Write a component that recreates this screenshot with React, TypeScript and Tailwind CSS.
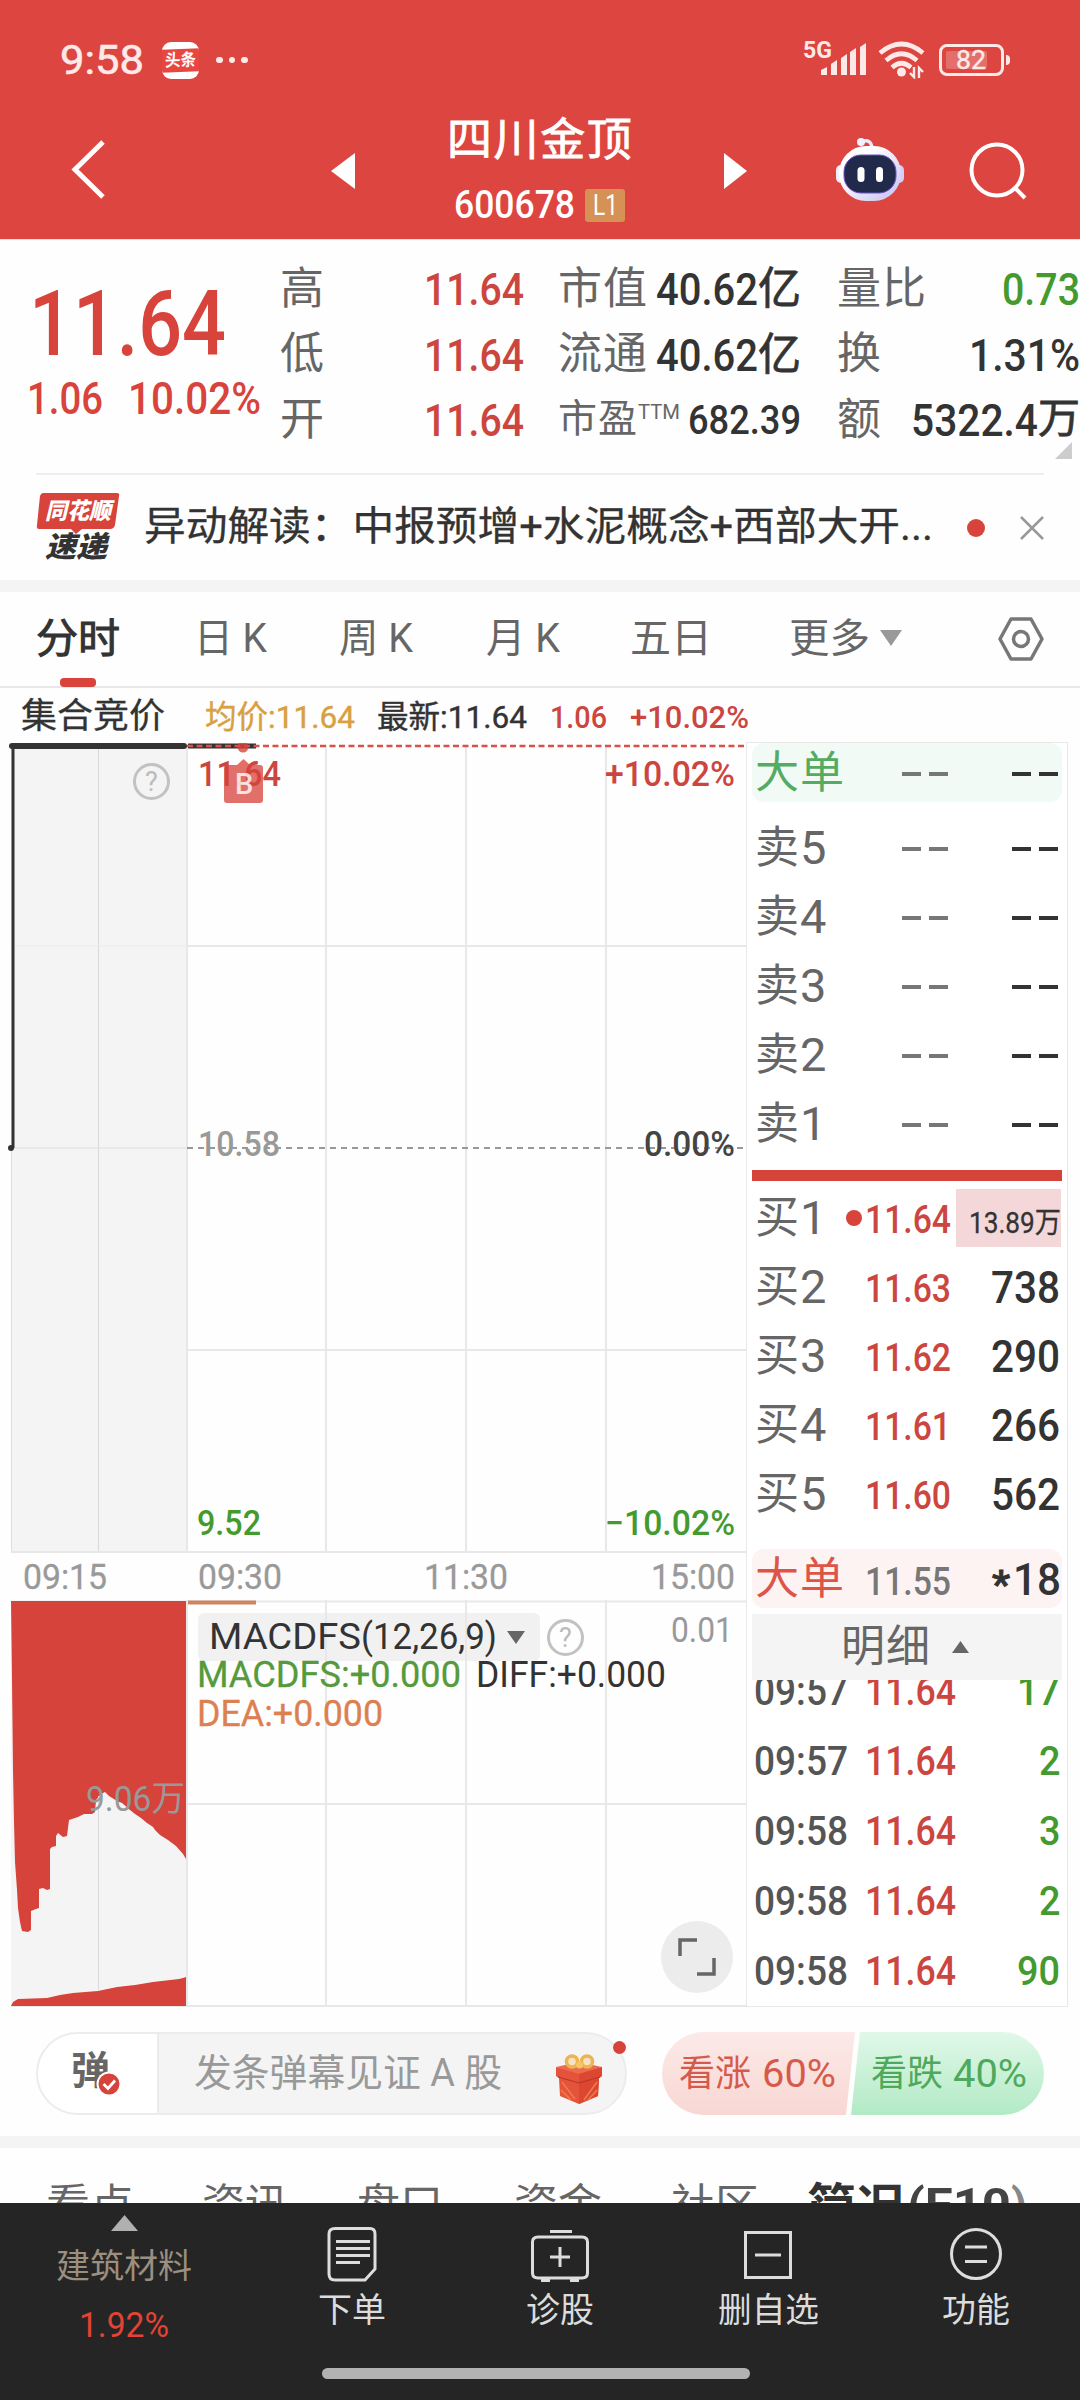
import React, { useLayoutEffect, useRef, useState } from 'react';
import clsx from 'clsx';

type FitProps = {
	w: number;
	className?: string;
	children: React.ReactNode;
};

// Text squeezed horizontally to a given width, gives the digits their narrow look
const Fit: React.FC<FitProps> = ({ w, className, children }) => {
	const ref = useRef<HTMLSpanElement>(null);
	const [scale, setScale] = useState(1);

	useLayoutEffect(() => {
		if (ref.current) setScale(w / ref.current.getBoundingClientRect().width * scale);
	}, [w]);

	return (
		<span className={clsx('block shrink-0 whitespace-nowrap leading-none', className)} style={{ width: w }}>
			<span ref={ref} className="inline-block origin-left align-top" style={{ transform: `scaleX(${scale})` }}>
				{children}
			</span>
		</span>
	);
};

const StatusBar = () => (
	<div className="h-[120px] flex items-center pl-[60px] pr-[70px] text-[#fdeae8]">
		<Fit w={84} className="text-[41px] [-webkit-text-stroke:0.6px]">9:58</Fit>
		<div className="ml-[18px] w-[37px] h-[37px] rounded-[9px] bg-white overflow-hidden flex items-center">
			<div className="w-full h-[23px] bg-[#e8473f] -skew-y-2 flex items-center justify-center">
				<Fit w={31} className="text-[17px] font-bold text-white">头条</Fit>
			</div>
		</div>
		<div className="ml-[17px] flex gap-[6px]">
			<i className="size-[6.5px] rounded-full bg-[#fdeae8]" />
			<i className="size-[6.5px] rounded-full bg-[#fdeae8]" />
			<i className="size-[6.5px] rounded-full bg-[#fdeae8]" />
		</div>
		<div className="ml-auto flex items-center">
			<div className="relative w-[64px] h-[36px]">
				<Fit w={29} className="absolute left-0 top-[-3px] text-[23px] font-bold">5G</Fit>
				<svg className="absolute right-0 top-0" width="64" height="36" viewBox="0 0 64 36" fill="currentColor">
					<path d="M18 28l6-3v8h-6zM28 22l6-4v15h-6zM38 16l6-4v21h-6zM47 10l6-4v27h-6zM57 5l6-4v32h-6z" />
				</svg>
			</div>
			<svg className="ml-[11px]" width="48" height="38" viewBox="0 0 48 38" fill="none" stroke="currentColor" strokeWidth="4.6">
				<path d="M2 12Q23.500-6 45 12" />
				<path d="M8 19.500Q23.500 6 39 19.500" />
				<path d="M14 26.500Q23.500 18 33 26.500" />
				<circle cx="23.500" cy="31" r="4.500" fill="currentColor" stroke="none" />
				<path d="M36 26v10l-4-4M41 37V27l4 4" strokeWidth="2.400" />
			</svg>
			<div className="ml-[13px] w-[65px] h-[32px] rounded-[8px] border-[3px] border-[#fdeae8] p-[4px] flex relative">
				<div className="w-[41px] h-full bg-[#fdeae8]/25 rounded-[2px]" />
				<Fit w={30} className="absolute left-[14px] top-[0px] text-[26px] [-webkit-text-stroke:0.4px]">82</Fit>
			</div>
			<div className="ml-[2px] w-[4px] h-[10px] rounded-r bg-[#fdeae8]" />
		</div>
	</div>
);

const Robot = () => (
	<svg width="70" height="66" viewBox="0 0 70 66" fill="none">
		<defs>
			<linearGradient id="shell" x1="0" y1="0" x2="1" y2="1">
				<stop offset="0.3" stopColor="#ffffff" />
				<stop offset="1" stopColor="#c3bdf0" />
			</linearGradient>
		</defs>
		<path d="M26 7Q36 3 37 13" stroke="#eeeafc" strokeWidth="3.500" />
		<circle cx="26" cy="7" r="4" fill="#f3f0ff" />
		<rect x="1" y="30" width="12" height="18" rx="5" fill="#f1effd" />
		<rect x="57" y="30" width="12" height="18" rx="5" fill="#d5cff5" />
		<rect x="4" y="11" width="62" height="55" rx="27" fill="url(#shell)" />
		<rect x="9" y="20" width="52" height="38" rx="17" fill="#222a4c" stroke="#6d52c8" strokeWidth="1" />
		<rect x="22.500" y="32" width="7" height="15" rx="3.500" fill="#fff" />
		<rect x="41" y="32" width="7" height="15" rx="3.500" fill="#fff" />
	</svg>
);

const Header = () => (
	<div className="bg-[#dd4540] h-[239px]">
		<StatusBar />
		<div className="h-[119px] flex items-center text-white">
			<svg className="ml-[69px] mt-[-21px]" width="38" height="62" viewBox="0 0 38 62" fill="none" stroke="currentColor" strokeWidth="5">
				<path d="M34 4L6 31.500L34 59" />
			</svg>
			<svg className="ml-[224px] mt-[-18px]" width="24" height="36" fill="currentColor"><path d="M0 18L24 0V36Z" /></svg>
			<div className="ml-[92px] w-[184px] h-full flex flex-col">
				<div className="mt-[-4px] text-[45px] leading-[50px] tracking-[1.6px] whitespace-nowrap [-webkit-text-stroke:0.8px]">四川金顶</div>
				<div className="mt-[20px] ml-[7px] flex items-center">
					<Fit w={121} className="text-[39px] font-medium">600678</Fit>
					<div className="ml-[10px] w-[40px] h-[33px] rounded-[3px] bg-[#d69254] flex items-center justify-center">
						<Fit w={25} className="text-[29px]">L1</Fit>
					</div>
				</div>
			</div>
			<svg className="ml-[93px] mt-[-18px]" width="23" height="36" fill="currentColor"><path d="M23 18L0 0V36Z" /></svg>
			<div className="ml-[88px] mt-[-24px]"><Robot /></div>
			<svg className="ml-[62px] mt-[-16px]" width="60" height="60" viewBox="0 0 60 60" fill="none" stroke="currentColor" strokeWidth="4">
				<circle cx="30" cy="28" r="25.500" />
				<path d="M48 46L58 56" />
			</svg>
		</div>
	</div>
);

const LABEL = 'text-[44px] leading-none tracking-[1px] text-[#666] whitespace-nowrap';
const ROW = 'h-[65.5px] flex items-center justify-between';

const Quote = () => (
	<div className="relative h-[233px] pt-[16px] flex">
		<div className="w-[280px] shrink-0 text-[#d8433b]">
			<Fit w={197} className="ml-[29px] mt-[24px] text-[90px] font-medium">11.64</Fit>
			<div className="flex mt-[7px]">
				<Fit w={76} className="ml-[27px] text-[44px] font-medium">1.06</Fit>
				<Fit w={133} className="ml-[25px] text-[44px] font-medium">10.02%</Fit>
			</div>
		</div>
		<div className="w-[244px]">
			{['高', '低', '开'].map((label) => (
				<div key={label} className={ROW}>
					<span className={LABEL}>{label}</span>
					<Fit w={100} className="mt-[2px] text-[45px] font-medium text-[#cc463f]">11.64</Fit>
				</div>
			))}
		</div>
		<div className="ml-[34px] w-[243px]">
			{['市值', '流通'].map((label) => (
				<div key={label} className={ROW}>
					<span className={LABEL}>{label}</span>
					<div className="flex mt-[2px] text-[#333]">
						<Fit w={102} className="text-[45px] font-medium">40.62</Fit>
						<Fit w={43} className="text-[44px] [-webkit-text-stroke:0.8px]">亿</Fit>
					</div>
				</div>
			))}
			<div className={ROW}>
				<div className="flex text-[#666]">
					<span className="text-[39px] leading-none tracking-[1px]">市盈</span>
					<Fit w={42} className="mt-[2px] text-[21px]">TTM</Fit>
				</div>
				<Fit w={113} className="mt-[2px] text-[41px] font-medium text-[#333]">682.39</Fit>
			</div>
		</div>
		<div className="ml-[36px] w-[243px]">
			<div className={ROW}>
				<span className={LABEL}>量比</span>
				<Fit w={78} className="mt-[2px] text-[45px] font-medium text-[#449a2e]">0.73</Fit>
			</div>
			<div className={ROW}>
				<span className={LABEL}>换</span>
				<Fit w={111} className="mt-[2px] text-[45px] font-medium text-[#333]">1.31%</Fit>
			</div>
			<div className={ROW}>
				<span className={LABEL}>额</span>
				<div className="flex mt-[1px] text-[#333]">
					<Fit w={127} className="text-[45px] font-medium">5322.4</Fit>
					<Fit w={42} className="text-[42px] [-webkit-text-stroke:0.8px]">万</Fit>
				</div>
			</div>
		</div>
		<svg className="absolute right-[8px] top-[202px]" width="17" height="17" fill="#ccc"><path d="M17 0V17H0Z" /></svg>
	</div>
);

const News = () => (
	<div className="h-[107px] mx-[36px] border-t-2 border-[#eee] flex items-center">
		<div className="relative w-[84px] h-[70px] mt-[-3px]">
			<svg className="absolute left-0 top-0" width="84" height="44" viewBox="0 0 84 44" fill="#d8433b">
				<path d="M7 2H81Q84 2 83 5L79 34Q78 38 74 38H46L40 43L35 38H4Q0 38 1 34L4 5Q5 2 7 2Z" />
			</svg>
			<Fit w={66} className="absolute left-[9px] top-[9px] text-[23px] font-black italic text-white">同花顺</Fit>
			<Fit w={62} className="absolute left-[9px] top-[42px] text-[29px] font-black italic text-[#333]">速递</Fit>
		</div>
		<Fit w={789} className="ml-[24px] mt-[-2px] text-[40px] text-[#333] [-webkit-text-stroke:0.3px]">异动解读：中报预增+水泥概念+西部大开...</Fit>
		<div className="ml-[34px] size-[18px] rounded-full bg-[#d8433b]" />
		<svg className="ml-[35px]" width="24" height="24" viewBox="0 0 24 24" stroke="#999" strokeWidth="2.500">
			<path d="M1 1L23 23M23 1L1 23" />
		</svg>
	</div>
);

const TAB = 'text-[40px] text-[#666]';

const ChartTabs = () => (
	<div className="relative h-[96px] border-b-2 border-[#e8e8e8] flex items-center pl-[36px]">
		<Fit w={84} className="text-[41px] text-[#333] [-webkit-text-stroke:1px]">分时</Fit>
		<Fit w={73} className={clsx(TAB, 'ml-[74px]')}>日 K</Fit>
		<Fit w={74} className={clsx(TAB, 'ml-[72px]')}>周 K</Fit>
		<Fit w={74} className={clsx(TAB, 'ml-[73px]')}>月 K</Fit>
		<Fit w={82} className={clsx(TAB, 'ml-[70px]')}>五日</Fit>
		<Fit w={81} className={clsx(TAB, 'ml-[77px]')}>更多</Fit>
		<svg className="ml-[10px] mt-[-2px]" width="22" height="16" fill="#999"><path d="M0 0H22L11 16Z" /></svg>
		<svg className="ml-[94px]" width="50" height="46" viewBox="0 0 50 46" fill="none" stroke="#777" strokeWidth="3.500">
			<path d="M15 3H35L46 23L35 43H15L4 23Z" strokeLinejoin="round" />
			<circle cx="25" cy="23" r="7.500" />
		</svg>
		<div className="absolute left-[60px] bottom-[-1px] w-[36px] h-[9px] rounded-[4px] bg-[#d8433b]" />
	</div>
);

const Help = ({ className }: { className: string }) => (
	<div className={clsx('absolute size-[37px] rounded-full border-[3px] border-[#c2c2c2] text-[#bbb] text-[27px] leading-[32px] text-center', className)}>?</div>
);

const LINE_TEXT = 'absolute text-[35px] font-medium';

const PriceChart = () => (
	<div className="relative h-[812px]">
		<svg className="absolute left-0 top-0" width="746" height="812" viewBox="0 0 746 812" fill="none">
			<rect x="11" y="2" width="175" height="807" fill="#f4f4f4" />
			<path d="M98.500 6V808" stroke="#d9d9d9" />
			<path d="M11 405H187" stroke="#ddd" />
			<path d="M11 203H187" stroke="#ebebeb" />
			<path d="M11.500 405V809" stroke="#ddd" />
			<path d="M187 2V809M326 2V809M466 2V809M606 2V809M187 203H746M187 607H746M11 809H746" stroke="#e8e8e8" strokeWidth="2" />
			<path d="M187 405H746" stroke="#999" strokeWidth="2" strokeDasharray="6 5" />
			<path d="M188 3H256" stroke="#333" strokeWidth="5" />
			<path d="M187 3H746" stroke="#d9524a" strokeWidth="2.500" strokeDasharray="6 3.500" />
			<path d="M13 405V3" stroke="#333" strokeWidth="3" />
			<path d="M12 3H184" stroke="#333" strokeWidth="6" strokeLinecap="round" />
			<circle cx="11" cy="405" r="3" fill="#333" />
			<circle cx="243" cy="4" r="5.500" fill="#d8433b" fillOpacity="0.8" />
		</svg>
		<Help className="left-[133px] top-[20px]" />
		<Fit w={83} className={clsx(LINE_TEXT, 'left-[198px] top-[14px] text-[#cc463f]')}>11.64</Fit>
		<div className="absolute left-[224px] top-[16px] w-[39px]">
			<svg width="39" height="44" viewBox="0 0 39 44" fill="#d8433b" fillOpacity="0.76">
				<path d="M3 6H13L19.500 0L26 6H36Q39 6 39 9V41Q39 44 36 44H3Q0 44 0 41V9Q0 6 3 6Z" />
			</svg>
			<span className="absolute left-[11px] top-[11px] text-[29px] leading-none font-medium text-white/80">B</span>
		</div>
		<Fit w={130} className={clsx(LINE_TEXT, 'left-[605px] top-[14px] text-[#cc463f]')}>+10.02%</Fit>
		<Fit w={82} className={clsx(LINE_TEXT, 'left-[198px] top-[384px] text-[#999]')}>10.58</Fit>
		<Fit w={91} className={clsx(LINE_TEXT, 'left-[644px] top-[384px] text-[#444]')}>0.00%</Fit>
		<Fit w={64} className={clsx(LINE_TEXT, 'left-[197px] top-[763px] text-[#449a2e]')}>9.52</Fit>
		<Fit w={130} className={clsx(LINE_TEXT, 'left-[605px] top-[763px] text-[#449a2e]')}>−10.02%</Fit>
	</div>
);

const MacdChart = () => (
	<div className="relative h-[408px]">
		<svg className="absolute left-0 top-0" width="746" height="408" viewBox="0 0 746 408" fill="none">
			<rect x="11" y="0" width="175" height="406" fill="#f4f4f4" />
			<path d="M187 0V406M326 0V406M466 0V406M606 0V406M187 1.500H746M187 204H746M11 406H746" stroke="#e8e8e8" strokeWidth="2" />
			<path
				fill="#d5433a"
				d="M11 1H186V259L183 254L176 246L168 240L160 235L155 230L153 227L147 223L141 218L135 214L130 210L122 203L117 201L109 196L105 192L101 194L96 200L95 212L92 214L84 214L78 217L69 220L67 236L63 237L58 233L56 236V246L52 247L50 249V289L47 290L43 288L39 289V308L36 309L31 311V330L28 332L22 331L20 322L18 308L17 290L15 262L14 222L13 170L12 80Z"
			/>
			<path fill="#d5433a" d="M11 406L13 402L18 399L47 398L60 395L73 393L98 391L117 387L135 385L153 382L179 379L183 378L186 377V406Z" />
			<path d="M98.500 196V390" stroke="#d9d9d9" />
			<path d="M188 2.500H256" stroke="#cc8560" strokeWidth="4" />
		</svg>
		<Fit w={99} className="absolute left-[86px] top-[182px] text-[35px] text-[#999]">9.06万</Fit>
		<div className="absolute left-[198px] top-[13px] w-[342px] h-[48px] rounded-[6px] bg-[#e8e8e8]/60 flex items-center pl-[11px] text-[36px] text-[#333]">
			<Fit w={152}>MACDFS</Fit>
			<Fit w={136}>(12,26,9)</Fit>
			<svg className="ml-[10px]" width="18" height="13" fill="#666"><path d="M0 0H18L9 13Z" /></svg>
		</div>
		<Help className="left-[547px] top-[19px]" />
		<Fit w={62} className="absolute left-[671px] top-[13px] text-[35px] text-[#999]">0.01</Fit>
		<div className="absolute left-[197px] top-[57px] text-[36px]">
			<div className="flex gap-[15px]">
				<Fit w={264} className="text-[#559a3c] [-webkit-text-stroke:0.3px]">MACDFS:+0.000</Fit>
				<Fit w={190} className="text-[#333]">DIFF:+0.000</Fit>
			</div>
			<Fit w={186} className="mt-[3px] text-[#dd8050] [-webkit-text-stroke:0.3px]">DEA:+0.000</Fit>
		</div>
		<div className="absolute left-[661px] top-[321px] size-[72px] rounded-full bg-[#ececec] flex items-center justify-center">
			<svg width="38" height="38" viewBox="0 0 38 38" fill="none" stroke="#666" strokeWidth="3.500">
				<path d="M2 18V2H19M36 20V36H19" />
			</svg>
		</div>
	</div>
);

const Dashes = ({ className }: { className: string }) => (
	<div className={clsx('flex gap-[8px]', className)}>
		<i className="w-[19px] h-[4px] bg-current" />
		<i className="w-[19px] h-[4px] bg-current" />
	</div>
);

const BIDS = [
	{ price: '11.64', qty: '13.89万' },
	{ price: '11.63', qty: '738' },
	{ price: '11.62', qty: '290' },
	{ price: '11.61', qty: '266' },
	{ price: '11.60', qty: '562' },
];

const TRADES = [
	{ time: '09:57', qty: '17' },
	{ time: '09:57', qty: '2' },
	{ time: '09:58', qty: '3' },
	{ time: '09:58', qty: '2' },
	{ time: '09:58', qty: '90' },
];

const OrderBook = () => (
	<div className="w-[322px] h-[1265px] mt-[-1px] border border-[#e8e8e8] bg-white px-[5px] flex flex-col">
		<div className="h-[59px] shrink-0 rounded-[12px] bg-[#f2faf6] flex items-center pl-[3px]">
			<span className="w-[147px] text-[44px] leading-none tracking-[1px] text-[#55ab62]">大单</span>
			<Dashes className="text-[#777] mt-[3px]" />
			<Dashes className="text-[#333] ml-[64px] mt-[3px]" />
		</div>
		<div className="mt-[11px]">
			{[5, 4, 3, 2, 1].map((n) => (
				<div key={n} className="h-[69px] flex items-center pl-[3px]">
					<span className="w-[45px] text-[44px] leading-none text-[#666]">卖</span>
					<span className="w-[102px] text-[47px] leading-none text-[#666]">{n}</span>
					<Dashes className="text-[#777] mt-[3px]" />
					<Dashes className="text-[#333] ml-[64px] mt-[3px]" />
				</div>
			))}
		</div>
		<div className="mt-[12px] h-[11px] shrink-0 bg-[#d5433a]" />
		<div className="mt-[2px]">
			{BIDS.map((bid, i) => (
				<div key={bid.price} className="h-[69px] flex items-center pl-[3px]">
					<span className="w-[45px] text-[44px] leading-none text-[#666]">买</span>
					<span className="w-[46px] text-[47px] leading-none text-[#666]">{i + 1}</span>
					<div className={clsx('size-[16px] mr-[3px] rounded-full', i === 0 && 'bg-[#d8433b]')} />
					<Fit w={86} className="mt-[5px] text-[39px] font-medium text-[#cc463f]">{bid.price}</Fit>
					{i === 0 ? (
						<div className="ml-[5px] w-[105px] h-[58px] bg-[#f4d7d8] flex items-center justify-end text-[#333]">
							<Fit w={92} className="mt-[11px] text-[29px] [-webkit-text-stroke:0.3px]">{bid.qty}</Fit>
						</div>
					) : (
						<Fit w={69} className="ml-[40px] mt-[2px] text-[45px] font-medium text-[#333]">{bid.qty}</Fit>
					)}
				</div>
			))}
		</div>
		<div className="mt-[21px] h-[59px] shrink-0 rounded-[12px] bg-[#fdf3f3] flex items-center pl-[3px]">
			<span className="w-[110px] text-[44px] leading-none tracking-[1px] text-[#dc5546]">大单</span>
			<Fit w={86} className="mt-[7px] text-[39px] font-medium text-[#777]">11.55</Fit>
			<div className="ml-[41px] mt-[2px] flex text-[#333] font-medium">
				<Fit w={18} className="text-[38px] translate-y-[9px] [-webkit-text-stroke:1px]">*</Fit>
				<Fit w={48} className="ml-[3px] text-[45px]">18</Fit>
			</div>
		</div>
		<div className="relative mt-[6px] h-[66px] shrink-0 bg-[#f4f4f4] flex items-center pl-[89px]">
			<span className="text-[44px] leading-none tracking-[1px] text-[#666]">明细</span>
			<svg className="ml-[21px]" width="17" height="12" fill="#666"><path d="M0 12H17L8.500 0Z" /></svg>
		</div>
		<div className="flex-1 overflow-hidden">
			<div className="mt-[-24px]">
				{TRADES.map((trade, i) => (
					<div key={i} className="h-[70px] flex items-center pl-[2px] text-[41px] font-medium">
						<Fit w={94} className="text-[#555]">{trade.time}</Fit>
						<Fit w={91} className="ml-[17px] text-[#cc463f]">11.64</Fit>
						<Fit w={trade.qty.length * 21.5} className="ml-auto mr-[2px] text-[#449a2e]">{trade.qty}</Fit>
					</div>
				))}
			</div>
		</div>
	</div>
);

const Chart = () => (
	<div className="h-[1264px] flex">
		<div className="w-[746px] shrink-0">
			<PriceChart />
			<div className="h-[45px] flex items-center text-[35px] text-[#999] [-webkit-text-stroke:0.3px]">
				<Fit w={84} className="ml-[23px]">09:15</Fit>
				<Fit w={84} className="ml-[91px]">09:30</Fit>
				<Fit w={84} className="ml-[142px]">11:30</Fit>
				<Fit w={84} className="ml-[143px]">15:00</Fit>
			</div>
			<MacdChart />
		</div>
		<OrderBook />
	</div>
);

const Gift = () => (
	<svg width="46" height="50" viewBox="0 0 46 50" fill="none">
		<path d="M0 13L23 18L46 13V22L43 24L42 42L23 50L4 42L3 24L0 22Z" fill="#e4533a" />
		<path d="M0 13L23 8L46 13L23 20Z" fill="#ee6a4e" />
		<path d="M23 20V50L42 42L43 24L46 22V13Z" fill="#dc4732" />
		<path d="M6 28L19 45M5 36L15 46M28 46L41 28M32 46L41 36" stroke="#f07a4c" strokeWidth="1.600" />
		<path d="M2 23L23 29L44 23" stroke="#b9352a" strokeWidth="1.200" />
		<circle cx="16" cy="7.500" r="5.500" fill="#f7e3c4" stroke="#edb450" strokeWidth="3.500" />
		<circle cx="31" cy="7.500" r="5.500" fill="#f7e3c4" stroke="#edb450" strokeWidth="3.500" />
		<circle cx="23.500" cy="11" r="3.500" fill="#f4c765" />
	</svg>
);

const Barrage = () => (
	<div className="h-[129px] pt-[25px] pl-[36px] flex">
		<div className="relative w-[591px] h-[83px] rounded-full border-2 border-[#ececec] bg-[#f4f4f4] flex items-center">
			<div className="relative w-[121px] h-full rounded-l-full bg-white border-r-2 border-[#ececec]">
				<Fit w={39} className="absolute left-[33px] top-[18px] text-[39px] font-bold text-[#666]">弹</Fit>
				<svg className="absolute left-[58px] top-[37px]" width="26" height="26" viewBox="0 0 26 26" fill="none">
					<circle cx="13" cy="13" r="11.500" fill="#d5433a" stroke="#fff" strokeWidth="2" />
					<path d="M7.500 13L12 17.500L19 9.500" stroke="#fff" strokeWidth="2.800" />
				</svg>
			</div>
			<Fit w={308} className="ml-[35px] mt-[-2px] text-[38px] text-[#999]">发条弹幕见证 A 股</Fit>
			<div className="ml-[54px] mt-[10px]"><Gift /></div>
			<div className="absolute right-[-1px] top-[7px] size-[13px] rounded-full bg-[#d5433a]" />
		</div>
		<div className="ml-[35px] flex h-[83px]">
			<div className="w-[193px] rounded-l-full bg-gradient-to-b from-[#fbeae8] to-[#f8d7d3] [clip-path:polygon(0_0,100%_0,95.300%_100%,0_100%)] flex items-center pl-[17px] text-[#d65a4c]">
				<Fit w={72} className="text-[36px]">看涨</Fit>
				<Fit w={74} className="ml-[11px] text-[38px]">60%</Fit>
			</div>
			<div className="ml-[-4px] w-[193px] rounded-r-full bg-gradient-to-b from-[#e0f8e9] to-[#b2eac5] [clip-path:polygon(4.700%_0,100%_0,100%_100%,0_100%)] flex items-center pl-[20px] text-[#4fa95c]">
				<Fit w={72} className="text-[36px]">看跌</Fit>
				<Fit w={74} className="ml-[10px] text-[38px]">40%</Fit>
			</div>
		</div>
	</div>
);

const InfoTabs = () => (
	<div className="h-[55px] overflow-hidden pt-[36px] pl-[46px] flex items-start text-[42px] text-[#666]">
		<Fit w={88}>看点</Fit>
		<Fit w={86} className="ml-[68px]">资讯</Fit>
		<Fit w={86} className="ml-[69px]">盘口</Fit>
		<Fit w={88} className="ml-[71px]">资金</Fit>
		<Fit w={88} className="ml-[69px]">社区</Fit>
		<Fit w={98} className="ml-[48px] mt-[-2px] text-[47px] font-bold text-[#333]">简况</Fit>
		<Fit w={104} className="ml-[2px] mt-[-3px] text-[47px] font-bold text-[#444]">(F10</Fit>
		<Fit w={16} className="mt-[-3px] text-[47px] font-bold text-[#888]">)</Fit>
	</div>
);

const NavItem = ({ label, w, className, children }: { label: string; w: number; className: string; children: React.ReactNode }) => (
	<div className={clsx('shrink-0 flex flex-col items-center', className)}>
		<svg width="60" height="60" viewBox="0 0 60 60" fill="none" stroke="#ddd" strokeWidth="3">{children}</svg>
		<Fit w={w} className="mt-[9px] text-[34px] text-[#dcdcdc]">{label}</Fit>
	</div>
);

const BottomNav = () => (
	<div className="h-[197px] bg-[#252525] flex flex-col">
		<div className="flex h-[165px]">
			<div className="w-[248px] flex flex-col items-center pt-[12px]">
				<svg width="27" height="16" fill="#b0b0b0"><path d="M0 16H27L13.500 0Z" /></svg>
				<Fit w={136} className="mt-[18px] text-[34px] text-[#9b8f80]">建筑材料</Fit>
				<Fit w={90} className="mt-[25px] text-[35px] text-[#e24334]">1.92%</Fit>
			</div>
			<NavItem label="下单" w={68} className="w-[208px] pt-[21px]">
				<path d="M13 4.500H48Q53 4.500 53 10V45L43 56H13Q7 56 7 50V10Q7 4.500 13 4.500ZM14 17.500H48M14 24.500H48M14 31.500H48M14 38.500H38" />
			</NavItem>
			<NavItem label="诊股" w={68} className="w-[208px] pt-[21px]">
				<path d="M20 7.500H42" />
				<path d="M8 13H52Q57.500 13 57.500 18V49Q57.500 54 52 54H8Q2.500 54 2.500 49V18Q2.500 13 8 13ZM20 33H40M30 23V43" />
				<path d="M11 56H20M40 56H49" strokeWidth="4" />
			</NavItem>
			<NavItem label="删自选" w={101} className="w-[208px] pt-[21px]">
				<path d="M7.500 8.500H52.500V53.500H7.500ZM17 31H43" />
			</NavItem>
			<NavItem label="功能" w={68} className="w-[208px] pt-[21px]">
				<circle cx="30" cy="30" r="24.500" />
				<path d="M19 23H41M19 37.500H41" />
			</NavItem>
		</div>
		<div className="ml-[322px] w-[428px] h-[11px] rounded-full bg-[#b2b2b2]" />
	</div>
);

export default function App() {
	return (
		<div className="w-[1080px] h-[2400px] overflow-hidden bg-[#fefefe] font-[Roboto,'Noto_Sans_CJK_SC',sans-serif]">
			<Header />
			<div className="h-px bg-[#f5dddc]" />
			<Quote />
			<News />
			<div className="h-[12px] bg-[#f4f4f4]" />
			<ChartTabs />
			<div className="h-[54px] flex items-center pl-[21px] mt-px">
				<Fit w={144} className="text-[35px] text-[#333] [-webkit-text-stroke:0.3px]">集合竞价</Fit>
				<Fit w={150} className="ml-[40px] mt-[2px] text-[32px] text-[#d8a040] [-webkit-text-stroke:0.4px]">均价:11.64</Fit>
				<Fit w={150} className="ml-[22px] mt-[2px] text-[32px] text-[#333] [-webkit-text-stroke:0.4px]">最新:11.64</Fit>
				<Fit w={57} className="ml-[23px] mt-[2px] text-[32px] font-medium text-[#cc463f]">1.06</Fit>
				<Fit w={119} className="ml-[23px] mt-[2px] text-[32px] font-medium text-[#cc463f]">+10.02%</Fit>
			</div>
			<Chart />
			<Barrage />
			<div className="h-[12px] bg-[#f4f4f4]" />
			<InfoTabs />
			<BottomNav />
		</div>
	);
}
